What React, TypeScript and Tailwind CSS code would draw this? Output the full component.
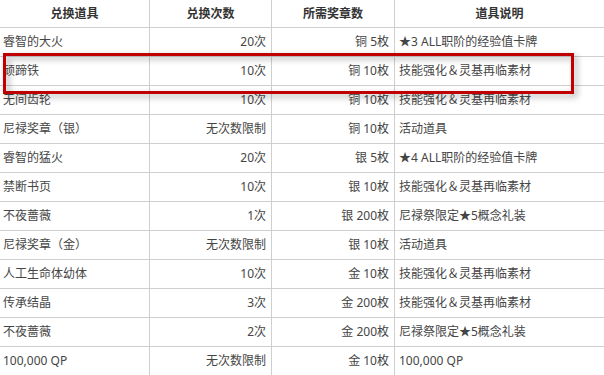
import { Fragment } from "react";

const rows: [string, string, string, string][] = [
  ["睿智的大火", "20次", "铜 5枚", "★3 ALL职阶的经验值卡牌"],
  ["顽蹄铁", "10次", "铜 10枚", "技能强化＆灵基再临素材"],
  ["无间齿轮", "10次", "铜 10枚", "技能强化＆灵基再临素材"],
  ["尼禄奖章（银）", "无次数限制", "铜 10枚", "活动道具"],
  ["睿智的猛火", "20次", "银 5枚", "★4 ALL职阶的经验值卡牌"],
  ["禁断书页", "10次", "银 10枚", "技能强化＆灵基再临素材"],
  ["不夜蔷薇", "1次", "银 200枚", "尼禄祭限定★5概念礼装"],
  ["尼禄奖章（金）", "无次数限制", "银 10枚", "活动道具"],
  ["人工生命体幼体", "10次", "金 10枚", "技能强化＆灵基再临素材"],
  ["传承结晶", "3次", "金 200枚", "技能强化＆灵基再临素材"],
  ["不夜蔷薇", "2次", "金 200枚", "尼禄祭限定★5概念礼装"],
  ["100,000 QP", "无次数限制", "金 10枚", "100,000 QP"],
];

const headers = ["兑换道具", "兑换次数", "所需奖章数", "道具说明"];

export default function App() {
  return (
    <div
      className="relative w-[604px] h-[375px] overflow-hidden bg-white text-[12px] text-[#454545]"
      style={{ fontFamily: '"Noto Sans", "Noto Sans CJK SC", sans-serif' }}
    >
      <div className="grid grid-cols-[150px_122px_123px_1fr]">
        {headers.map((h, i) => (
          <div
            key={h}
            className={`h-[28px] flex items-center justify-center border-b border-[#cfcfcf] font-bold text-[#333] ${
              i < 3 ? "border-r" : ""
            }`}
          >
            {h}
          </div>
        ))}
        {rows.map((r, ri) => (
          <Fragment key={ri}>
            <div className="h-[29px] flex items-center pl-[3px] border-b border-r border-[#cfcfcf] whitespace-nowrap">
              {r[0]}
            </div>
            <div className="h-[29px] flex items-center justify-end pr-[5px] border-b border-r border-[#cfcfcf] whitespace-nowrap">
              {r[1]}
            </div>
            <div className="h-[29px] flex items-center justify-end pr-[5px] border-b border-r border-[#cfcfcf] whitespace-nowrap">
              {r[2]}
            </div>
            <div className="h-[29px] flex items-center pl-[4px] border-b border-[#cfcfcf] whitespace-nowrap">
              {r[3]}
            </div>
          </Fragment>
        ))}
      </div>

      {/* highlight annotation */}
      <div className="absolute left-[3px] top-[53px] w-[571px] h-[41px] border-[3px] border-[#c00000] [filter:drop-shadow(3px_3px_3px_rgba(0,0,0,0.35))]" />
    </div>
  );
}
